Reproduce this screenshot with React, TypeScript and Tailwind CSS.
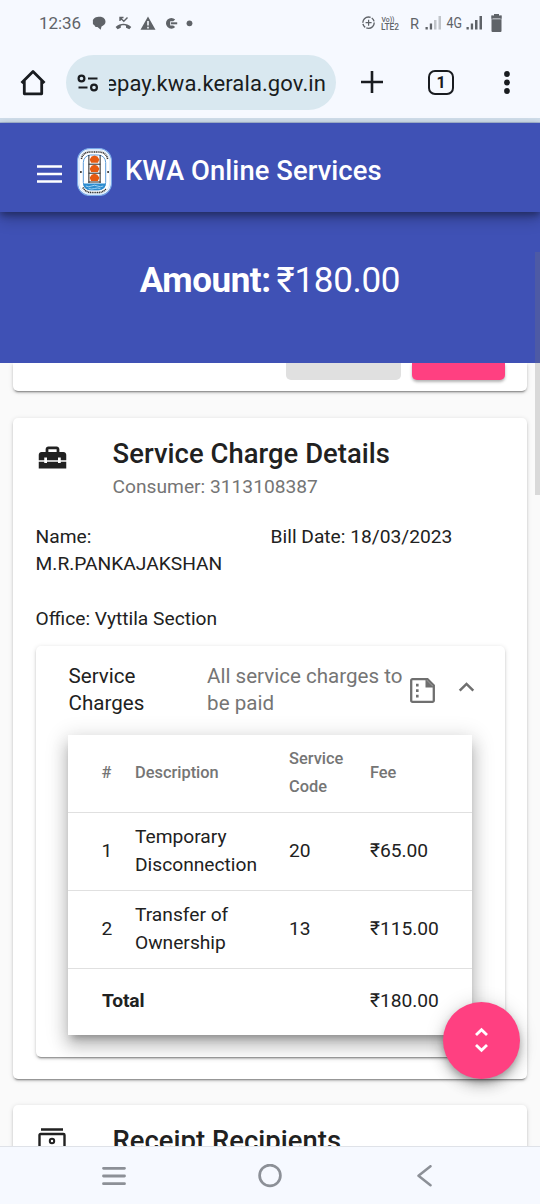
import React from "react";
import { MdHomeRepairService } from "react-icons/md";

function StatusBar() {
  return (
    <div className="flex h-[45px] items-center text-[#5f6368]">
      <span className="ml-[39px] w-[42px] whitespace-nowrap text-[17px] leading-[20px] tracking-[-0.1px]">12:36</span>
      <svg className="ml-[10px] h-[20px] w-[110px]" viewBox="91 12 110 20" fill="currentColor">
        <path d="M98.500 15.800c4.200-.6 7 1.800 7 5 0 2.200-1.500 3.800-4 4.600l-.8 3.300-3.200-2.800c-1.500.2-2.600-.2-2.800-1.500-1.700-.7-2.200-2-1.700-3.400-.8-2.600 1.800-4.900 5.500-5.200z" />
        <path d="M115.600 26c5-4.200 10.700-4.200 15.700 0l-2 2.300-3.300-1.500v-2c-2-.6-3.300-.6-5.200 0v2l-3.200 1.500z" />
        <path d="M120 20v-3.500h3.500M120 16.500l3.800 3.800 3.700-3.800" fill="none" stroke="currentColor" strokeWidth="1.400" />
        <path fillRule="evenodd" d="M148 15.500l7.500 13.300h-15zM147.200 20v4.500h1.600V20zM147.200 25.800v1.600h1.600v-1.600z" />
        <path d="M175.200 18.500a5.400 5.400 0 1 0 0 7.600l-2-1.500h-3v-4.400h3z" />
        <path d="M171 21.300h6.200v2H171z" />
        <circle cx="189.500" cy="22.300" r="2.900" />
      </svg>
      <svg className="ml-auto mr-[37px] h-[22px] w-[143px]" viewBox="360 11 143 22" fill="currentColor">
        <circle cx="368.500" cy="21.700" r="5.700" fill="none" stroke="currentColor" strokeWidth="1.400" strokeDasharray="11 1.200 4 1.200" />
        <path d="M368 18.700h1.200v2.400h2.400v1.200h-2.400v2.400H368v-2.400h-2.400v-1.200h2.400z" />
        <text x="381.500" y="20.500" fontSize="8" fontWeight="500" textLength="13" lengthAdjust="spacingAndGlyphs" fontFamily="Roboto">Vo))</text>
        <text x="381" y="28.500" fontSize="8.500" fontWeight="500" textLength="18" lengthAdjust="spacingAndGlyphs" fontFamily="Roboto">LTE2</text>
        <text x="410" y="27.500" fontSize="15.500" textLength="9" lengthAdjust="spacingAndGlyphs" fontFamily="Roboto">R</text>
        <path d="M425.500 26h2.300v2.500h-2.300zM429.800 22.500h2.300v6h-2.300z" />
        <path opacity=".35" d="M434 19h2.500v9.500H434zM438.500 15h2.500v13.500h-2.500z" />
        <text x="446.500" y="27" fontSize="14.500" textLength="15.500" lengthAdjust="spacingAndGlyphs" fontFamily="Roboto">4G</text>
        <path d="M466.500 26h2.300v2.500h-2.300zM470.800 22.500h2.300v6h-2.300zM475 19h2.500v9.500H475zM479.500 15h2.500v13.500h-2.500z" />
        <path d="M494 13h5v1.500h2.500v3h-10v-3h2.500zM491.500 18.200h10V30a1 1 0 0 1-1 1h-8a1 1 0 0 1-1-1z" />
        <path d="M492 14.500v3.700M501 14.500v3.700" stroke="currentColor" />
      </svg>
    </div>
  );
}

function BrowserBar() {
  return (
    <div className="flex h-[73px] items-start pt-[10px] text-[#191c20]">
      <svg className="ml-[20px] mt-[14px] h-[28px] w-[26px] shrink-0" viewBox="0 0 26 28" fill="none" stroke="currentColor" strokeWidth="2.800" strokeLinejoin="round">
        <path d="M1.500 14L13 2.500 24.500 14M4.300 12v12.800h17.400V12" />
      </svg>
      <div className="ml-[20px] flex h-[55px] w-[270px] shrink-0 items-center rounded-full bg-[#d9e8f0]">
        <svg className="ml-[11px] h-[18px] w-[22px] shrink-0" viewBox="0 0 22 18" fill="none" stroke="currentColor" strokeWidth="2.200">
          <circle cx="4.500" cy="4.500" r="2.900" />
          <path d="M11 4.500h9.500M1.500 13.500h9" />
          <circle cx="17" cy="13.500" r="2.900" />
        </svg>
        <div className="ml-[10px] mt-[2px] flex w-[217px] justify-end overflow-hidden">
          <span className="whitespace-nowrap text-[22px] leading-[30px] tracking-[0.1px]">epay.kwa.kerala.gov.in</span>
        </div>
      </div>
      <svg className="ml-[25px] mt-[16px] h-[22px] w-[22px] shrink-0" viewBox="0 0 22 22" stroke="currentColor" strokeWidth="2.600">
        <path d="M11 0v22M0 11h22" />
      </svg>
      <div className="ml-[45px] mt-[15px] flex h-[25px] w-[26px] shrink-0 items-center justify-center rounded-[7px] border-[2.500px] border-[#191c20] pt-px text-[16px] font-bold leading-none">1</div>
      <svg className="ml-[49px] mt-[15px] h-[26px] w-[8px] shrink-0" viewBox="0 0 8 26" fill="currentColor">
        <circle cx="4" cy="4" r="2.900" />
        <circle cx="4" cy="12.500" r="2.900" />
        <circle cx="4" cy="21" r="2.900" />
      </svg>
    </div>
  );
}

function Emblem() {
  return (
    <svg className="h-[48px] w-[35px]" viewBox="0 0 36 48" preserveAspectRatio="none">
      <rect x=".6" y=".6" width="34.800" height="46.800" rx="12.500" fill="#fff" stroke="#79a8e8" strokeWidth="1.200" />
      <rect x="2.200" y="2.200" width="31.600" height="43.600" rx="11" fill="none" stroke="#b5d4f4" strokeWidth=".6" />
      <path d="M4.500 11Q6 4 14 4h8q8 0 9.500 7M6 39.500q3 5 9 5h7q5 0 8-4" fill="none" stroke="#333" strokeWidth="1.600" strokeDasharray="1.200 .6" />
      <rect x="6.500" y="7" width="23" height="35" rx="7.500" fill="#fff" stroke="#5b9bd9" strokeWidth="1" />
      <path d="M6.500 35.500h23q0 6.500-7 6.500h-9q-7 0-7-6.500z" fill="#2c8ccf" />
      <path d="M9 38q3 1.500 6 0t6 0 6 0M12 40.500q3 1 6 0t6 0" fill="none" stroke="#bde3fa" strokeWidth=".8" />
      <path d="M12.200 7v28M23.800 7v28M12 16.200h12M12 25.200h12M12 34h12" stroke="#222" strokeWidth="1" />
      <g fill="#e65a12">
        <path d="M18 7.500l3 1 2 3-1.500 3.200h-7L13 11.500l2-3z" />
        <path d="M18 16.700l3 1 2 3-1.500 3.200h-7L13 20.700l2-3z" />
        <path d="M18 25.700l3 1 2 3-1.500 3.200h-7L13 29.700l2-3z" />
      </g>
      <circle cx="4" cy="24" r="1" fill="#222" />
      <circle cx="32" cy="24" r="1" fill="#222" />
    </svg>
  );
}

const charges = [
  { id: 1, first: "Temporary", second: "Disconnection", code: "20", fee: "₹65.00" },
  { id: 2, first: "Transfer of", second: "Ownership", code: "13", fee: "₹115.00" },
];

const cardShadow = "shadow-[0_3px_1px_-2px_rgba(0,0,0,0.25),0_2px_2px_rgba(0,0,0,0.16),0_1px_5px_rgba(0,0,0,0.14)]";

function ChargesTable() {
  return (
    <div className="ml-[32.400px] mt-[15.500px] h-[300px] w-[404px] bg-white shadow-[0_7px_7px_-4px_rgba(0,0,0,0.25),0_11px_15px_1px_rgba(0,0,0,0.17),0_4px_20px_3px_rgba(0,0,0,0.14)]">
      <div className="grid h-[78px] grid-cols-[67px_154px_81px_102px] items-center border-b border-[#e0e0e0] pb-px text-[16.4px] font-medium leading-[27.4px] text-[#757575]">
        <span className="pl-[33.500px]">#</span>
        <span>Description</span>
        <span>Service<br />Code</span>
        <span>Fee</span>
      </div>
      {charges.map((charge) => (
        <div key={charge.id} className="grid h-[78px] grid-cols-[67px_154px_81px_102px] items-center border-b border-[#e0e0e0] pb-px">
          <span className="pl-[33.500px]">{charge.id}</span>
          <span>{charge.first}<br />{charge.second}</span>
          <span>{charge.code}</span>
          <span>{charge.fee}</span>
        </div>
      ))}
      <div className="grid h-[66px] grid-cols-[302px_102px] items-center pb-px">
        <span className="pl-[34px] font-bold tracking-[-0.1px]">Total</span>
        <span>₹180.00</span>
      </div>
    </div>
  );
}

function ServiceCard() {
  return (
    <section className={`ml-[13px] mt-[27px] h-[661px] w-[514px] rounded-[5px] bg-white pl-[22.600px] ${cardShadow}`}>
      <div className="flex h-[105px] pt-[14px]">
        <MdHomeRepairService className="mt-[8.500px] h-[33px] w-[33px]" />
        <div className="ml-[44px]">
          <h2 className="h-[41px] text-[27.4px] font-medium leading-[44px] tracking-[0.05px]">Service Charge Details</h2>
          <p className="leading-[28px] text-[#757575]">Consumer: 3113108387</p>
        </div>
      </div>
      <div className="grid h-[82px] grid-cols-[235px_1fr]">
        <p>Name:<br />M.R.PANKAJAKSHAN</p>
        <p>Bill Date: 18/03/2023</p>
      </div>
      <p className="h-[41px]">Office: Vyttila Section</p>
      <div className={`h-[411px] w-[469.500px] rounded-[5px] bg-white ${cardShadow}`}>
        <div className="flex h-[73px] pl-[33px] pt-[17px] text-[20.570px]">
          <p className="w-[138.500px] shrink-0">Service<br />Charges</p>
          <p className="w-[204px] shrink-0 whitespace-nowrap text-[#757575]">All service charges to<br />be paid</p>
          <svg className="-ml-px mt-[15px] h-[25px] w-[25px] shrink-0" viewBox="0 0 25 25" fill="none" stroke="#6f6f6f" strokeWidth="2.300">
            <path d="M2.500 1.200h15l6.300 6.300v15a1.300 1.300 0 0 1-1.300 1.300h-20a1.300 1.300 0 0 1-1.300-1.300v-20a1.300 1.300 0 0 1 1.300-1.300z" />
            <path d="M15.500 1v8.500H24z" fill="#6f6f6f" stroke="none" />
            <path d="M7.300 5.800v2.600M7.300 11.300v2.600M7.300 16.800v2.600" strokeWidth="2.600" />
          </svg>
          <svg className="ml-[22.500px] mt-[18px] h-[12px] w-[17px] shrink-0" viewBox="0 0 17 12" fill="none" stroke="#6f6f6f" strokeWidth="2.500">
            <path d="M1.700 9.700l6.800-6.800 6.800 6.800" />
          </svg>
        </div>
        <ChargesTable />
      </div>
    </section>
  );
}

function Navigation() {
  return (
    <nav className="flex h-[58px] items-center border-t border-[#dfe2e8] bg-[#f6f9ff]">
      <svg className="ml-[102px] h-[20px] w-[24px]" viewBox="0 0 24 20" stroke="#8c9097" strokeWidth="2.800" strokeLinecap="round">
        <path d="M1.500 2.300h21M1.500 10h21M1.500 17.700h21" />
      </svg>
      <svg className="ml-[132px] h-[24px] w-[24px]" viewBox="0 0 24 24" fill="none" stroke="#8c9097" strokeWidth="2.700">
        <circle cx="12" cy="11.500" r="10.400" />
      </svg>
      <svg className="ml-[135px] h-[22px] w-[15px]" viewBox="0 0 15 22" fill="none" stroke="#8c9097" strokeWidth="2.500" strokeLinecap="round" strokeLinejoin="round">
        <path d="M13.500 1.200L1.500 10.700l12 9.500" />
      </svg>
    </nav>
  );
}

export default function App() {
  return (
    <div className="relative flex h-[1204px] w-[540px] flex-col overflow-hidden bg-[#f6f9ff] font-[Roboto,sans-serif] text-[19.2px] leading-[27.4px] text-[#212121]">
      <StatusBar />
      <BrowserBar />
      <div className="h-[5px] shrink-0 border-b border-[#a9bad5] bg-[#cfddea]" />
      <header className="relative z-10 flex h-[89px] shrink-0 items-center bg-[#3f51b5] text-white shadow-[0_3px_7px_rgba(0,0,0,0.35),0_8px_14px_rgba(0,0,0,0.2)]">
        <svg className="ml-[37px] mt-[13px] h-[18px] w-[25px]" viewBox="0 0 25 18" stroke="currentColor" strokeWidth="2.700">
          <path d="M0 1.500h25M0 9h25M0 16.500h25" />
        </svg>
        <div className="ml-[15px] mt-[8px]"><Emblem /></div>
        <h1 className="ml-[13px] mt-[6px] whitespace-nowrap text-[27.4px] font-medium leading-[44px] tracking-[0.06px]">KWA Online Services</h1>
      </header>
      <div className="flex h-[151px] shrink-0 items-center justify-center bg-[#3f51b5] pb-[13px] text-[35px] leading-[44px] text-white">
        <span className="font-bold tracking-[-0.45px]">Amount:</span>
        <span className="ml-[6px] tracking-[-0.300px]">₹180.00</span>
      </div>
      <main className="h-[783px] shrink-0 overflow-hidden bg-[#fafafa]">
        <div className={`ml-[13px] flex h-[28px] w-[514px] rounded-b-[5px] bg-white ${cardShadow}`}>
          <div className="ml-[272.500px] h-[17px] w-[115px] rounded-b-[5px] bg-[#e0e0e0]" />
          <div className="ml-[11.500px] h-[17px] w-[93px] rounded-b-[5px] bg-[#ff4081] shadow-[0_2px_3px_rgba(0,0,0,0.3)]" />
        </div>
        <ServiceCard />
        <section className={`ml-[13px] mt-[26px] flex h-[90px] w-[514px] rounded-[5px] bg-white pl-[25px] pt-[14px] ${cardShadow}`}>
          <svg className="mt-[8px] h-[30px] w-[28px] shrink-0" viewBox="0 0 28 30" fill="none" stroke="#212121" strokeWidth="2.400">
            <path d="M3 2.500h22M1.500 28V8a1 1 0 0 1 1-1h23a1 1 0 0 1 1 1v20" />
            <circle cx="14" cy="14" r="2.200" strokeWidth="2" />
          </svg>
          <h2 className="ml-[46.500px] text-[27.4px] font-medium leading-[44px] tracking-[0.04px]">Receipt Recipients</h2>
        </section>
      </main>
      <Navigation />
      <button className="absolute left-[443px] top-[1001.500px] z-20 flex h-[77px] w-[77px] items-center justify-center rounded-full bg-[#ff4081] shadow-[0_4px_7px_-1px_rgba(0,0,0,0.25),0_8px_14px_rgba(0,0,0,0.17),0_1px_20px_rgba(0,0,0,0.14)]">
        <svg className="h-[26px] w-[13px]" viewBox="0 0 13 26" fill="none" stroke="white" strokeWidth="2.800">
          <path d="M1 8l5.500-5.300L12 8M1 18l5.500 5.300L12 18" />
        </svg>
      </button>
      <div className="absolute left-[535px] top-[252px] z-20 h-[243px] w-[5px] bg-[#777]/25" />
    </div>
  );
}
